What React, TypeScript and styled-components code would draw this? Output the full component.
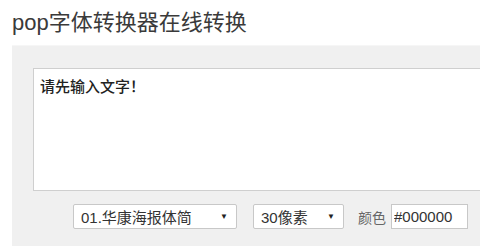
import React from 'react';
import styled, { createGlobalStyle } from 'styled-components';

const GlobalStyle = createGlobalStyle`
  html, body {
    margin: 0;
    padding: 0;
    background: #ffffff;
    overflow: hidden;
  }
  body {
    font-family: "Liberation Sans", "Noto Sans CJK SC", sans-serif;
    color: #333333;
  }
`;

const Page = styled.div`
  width: 480px;
  height: 246px;
  overflow: hidden;
`;

const Title = styled.h1`
  margin: 0;
  padding: 10px 0 0 12px;
  height: 34px;
  box-sizing: border-box;
  font-size: 22px;
  font-weight: normal;
  line-height: 26px;
  color: #3a3a3a;
  white-space: nowrap;
`;

const Panel = styled.div`
  margin: 11px 0 0 12px;
  width: 520px;
  height: 210px;
  box-sizing: border-box;
  padding: 22px 0 0 21px;
  background: #f0f0f0;
  border-top: 1px solid #f6f6f6;
`;

const TextBox = styled.textarea`
  display: block;
  width: 500px;
  height: 123px;
  box-sizing: border-box;
  margin: 0;
  padding: 6px 6px;
  border: 1px solid #cfcfcf;
  background: #ffffff;
  font-family: "Liberation Sans", "Noto Sans CJK SC", sans-serif;
  font-size: 15px;
  font-weight: 500;
  color: #222222;
  resize: none;
  outline: none;
`;

const Toolbar = styled.div`
  display: flex;
  align-items: center;
  padding: 13px 0 0 40px;
`;

const Select = styled.div<{ $width: number; $gap: number }>`
  display: flex;
  align-items: center;
  justify-content: space-between;
  width: ${p => p.$width}px;
  height: 25px;
  box-sizing: border-box;
  margin-right: ${p => p.$gap}px;
  padding: 0 8px 0 7px;
  background: #ffffff;
  border: 1px solid #c8c8c8;
  border-radius: 2px;
  font-size: 15px;
  color: #333333;
`;

const Arrow = styled.span`
  font-size: 8px;
  color: #222222;
`;

const Label = styled.span`
  font-size: 14px;
  color: #666666;
  margin-right: 5px;
`;

const ColorInput = styled.input`
  width: 77px;
  height: 25px;
  box-sizing: border-box;
  margin: 0;
  padding: 0 2px;
  border: 1px solid #c8c8c8;
  background: #ffffff;
  font-family: "Liberation Sans", "Noto Sans CJK SC", sans-serif;
  font-size: 15px;
  color: #333333;
  outline: none;
`;

const App: React.FC = () => (
  <Page>
    <GlobalStyle />
    <Title>pop字体转换器在线转换</Title>
    <Panel>
      <TextBox defaultValue="请先输入文字！" />
      <Toolbar>
        <Select $width={164} $gap={16}>
          <span>01.华康海报体简</span>
          <Arrow>▼</Arrow>
        </Select>
        <Select $width={91} $gap={14}>
          <span>30像素</span>
          <Arrow>▼</Arrow>
        </Select>
        <Label>颜色</Label>
        <ColorInput defaultValue="#000000" />
      </Toolbar>
    </Panel>
  </Page>
);

export default App;
